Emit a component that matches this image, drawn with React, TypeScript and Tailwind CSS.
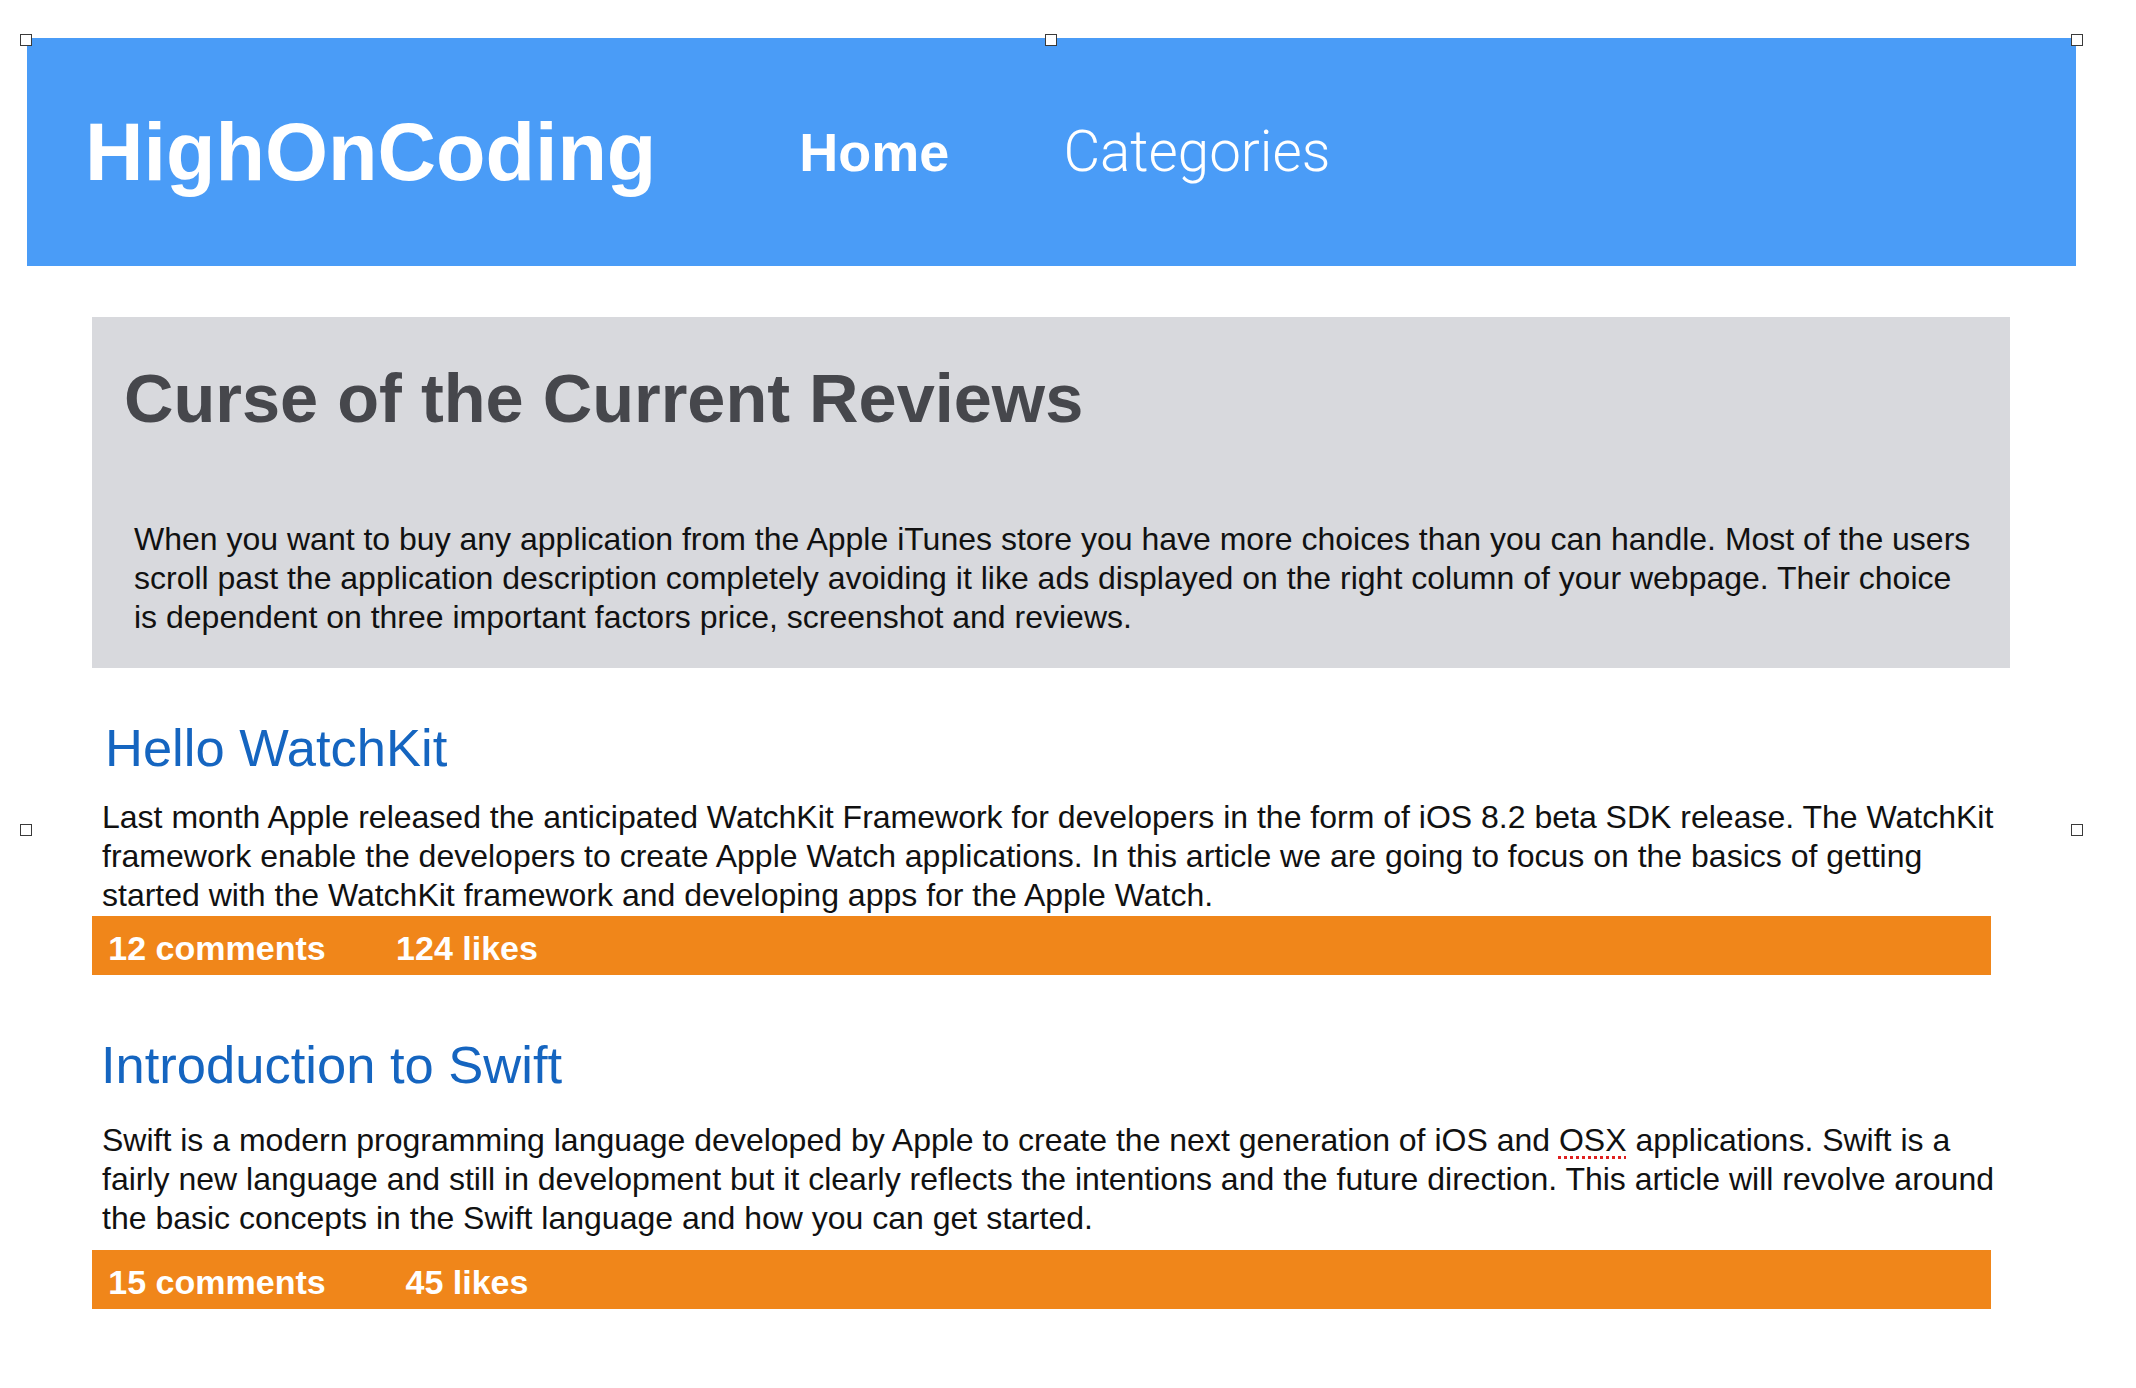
import React from "react";

const Handle = ({ className }: { className: string }) => (
  <div className={`absolute w-[12px] h-[12px] bg-white border border-[#3a3a3a] ${className}`} />
);

const Bar = ({ comments, likes }: { comments: string; likes: string }) => (
  <div className="w-[1899px] h-[59px] bg-[#f0861a] flex items-center text-white font-bold text-[34px] leading-none">
    <div className="w-[250px] text-center pt-[4px]">{comments}</div>
    <div className="w-[250px] text-center pt-[4px]">{likes}</div>
  </div>
);

export default function App() {
  return (
    <div
      className="relative bg-white min-h-[1388px] w-[2136px] pt-[38px]"
      style={{ fontFamily: '"Liberation Sans", Arial, Helvetica, sans-serif' }}
    >
      <header className="ml-[27px] w-[2049px] h-[228px] bg-[#4a9cf7] flex items-center pl-[58px] text-white">
        <div className="text-[81px] font-bold leading-none">HighOnCoding</div>
        <nav className="flex items-center">
          <a className="ml-[143px] text-[54px] font-bold leading-none">Home</a>
          <a
            className="ml-[114px] text-[56.5px] font-light leading-none"
            style={{ fontFamily: 'Roboto, "Liberation Sans", sans-serif' }}
          >
            Categories
          </a>
        </nav>
      </header>

      <main className="ml-[92px] mt-[51px]">
        <section className="w-[1918px] bg-[#d8d9dd] pt-[48px] pb-[31px] px-[32px]">
          <h1 className="text-[68.5px] leading-[68px] font-bold text-[#46474c]">
            Curse of the Current Reviews
          </h1>
          <p className="mt-[87px] ml-[10px] text-[32px] leading-[39px] text-[#111] whitespace-nowrap">
            When you want to buy any application from the Apple iTunes store you have more choices than you can handle. Most of the users
            <br />
            scroll past the application description completely avoiding it like ads displayed on the right column of your webpage. Their choice
            <br />
            is dependent on three important factors price, screenshot and reviews.
          </p>
        </section>

        <article className="mt-[54px]">
          <h2 className="pl-[13px] text-[52.5px] leading-[52px] text-[#1565c0]">Hello WatchKit</h2>
          <p className="mt-[24px] pl-[10px] text-[32px] leading-[39px] text-[#111] whitespace-nowrap">
            Last month Apple released the anticipated WatchKit Framework for developers in the form of iOS 8.2 beta SDK release. The WatchKit
            <br />
            framework enable the developers to create Apple Watch applications. In this article we are going to focus on the basics of getting
            <br />
            started with the WatchKit framework and developing apps for the Apple Watch.
          </p>
          <div className="mt-[1px]">
            <Bar comments="12 comments" likes="124 likes" />
          </div>
        </article>

        <article className="mt-[64px]">
          <h2 className="pl-[9px] text-[52.5px] leading-[52px] text-[#1565c0]">Introduction to Swift</h2>
          <p className="mt-[30px] pl-[10px] text-[32px] leading-[39px] text-[#111] whitespace-nowrap">
            Swift is a modern programming language developed by Apple to create the next generation of iOS and{" "}
            <span className="underline decoration-dotted decoration-[#e02020] decoration-[3px] underline-offset-[5px]">OSX</span>{" "}
            applications. Swift is a
            <br />
            fairly new language and still in development but it clearly reflects the intentions and the future direction. This article will revolve around
            <br />
            the basic concepts in the Swift language and how you can get started.
          </p>
          <div className="mt-[12px]">
            <Bar comments="15 comments" likes="45 likes" />
          </div>
        </article>
      </main>

      <Handle className="left-[20px] top-[34px]" />
      <Handle className="left-[1045px] top-[34px]" />
      <Handle className="left-[2071px] top-[34px]" />
      <Handle className="left-[20px] top-[824px]" />
      <Handle className="left-[2071px] top-[824px]" />
    </div>
  );
}
